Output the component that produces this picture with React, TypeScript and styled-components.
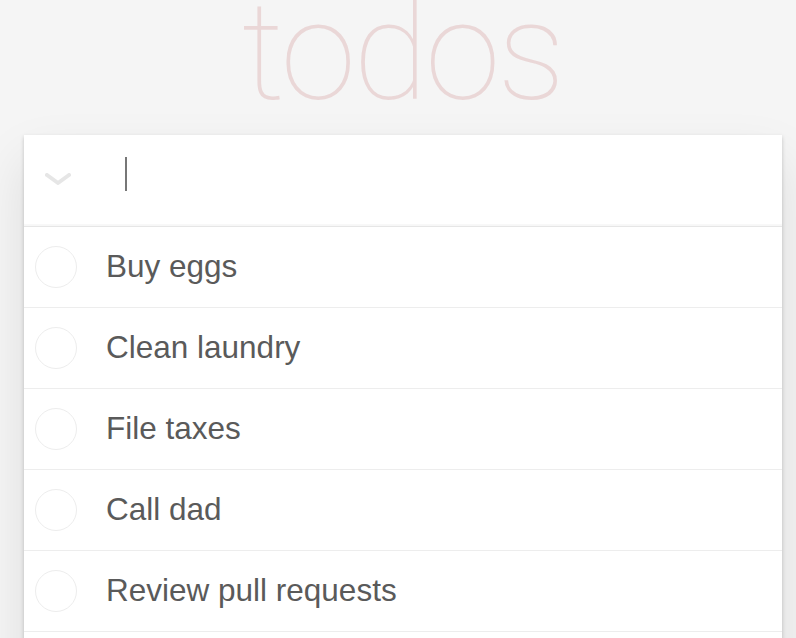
import React from "react";
import styled, { createGlobalStyle } from "styled-components";

const GlobalStyle = createGlobalStyle`
  html, body {
    margin: 0;
    padding: 0;
    background: #f5f5f5;
    font-family: "Liberation Sans", Arial, sans-serif;
    color: #4d4d4d;
    overflow: hidden;
  }
`;

const Page = styled.div`
  width: 796px;
  height: 638px;
  overflow: hidden;
  display: flex;
  flex-direction: column;
`;

const Header = styled.header`
  height: 135px;
  flex: none;
  display: flex;
  flex-direction: column;
`;

const Title = styled.h1`
  margin: 0;
  padding-left: 8px;
  font-family: Roboto, "Open Sans", sans-serif;
  font-weight: 100;
  font-size: 137px;
  line-height: 105px;
  text-align: center;
  color: rgba(175, 47, 47, 0.15);
  letter-spacing: -3px;
`;

const Panel = styled.section`
  flex: none;
  margin-left: 24px;
  width: 758px;
  background: #fff;
  box-shadow: 0 2px 4px rgba(0, 0, 0, 0.2), 0 25px 50px rgba(0, 0, 0, 0.1);
  display: flex;
  flex-direction: column;
`;

const NewRow = styled.div`
  height: 91px;
  display: flex;
  align-items: flex-start;
  box-shadow: inset 0 -2px 1px rgba(0, 0, 0, 0.03);
  border-bottom: 1px solid #e6e6e6;
`;

const ToggleAll = styled.div`
  width: 101px;
  display: flex;
  padding-left: 21px;
  padding-top: 38px;
  box-sizing: border-box;
`;

const Caret = styled.span`
  width: 2px;
  height: 34px;
  background: #777;
  margin-top: 22px;
`;

const List = styled.ul`
  margin: 0;
  padding: 0;
  list-style: none;
`;

const Item = styled.li`
  height: 80px;
  border-bottom: 1px solid #ededed;
  display: flex;
  align-items: center;
`;

const Check = styled.span`
  width: 40px;
  height: 40px;
  border-radius: 50%;
  border: 1px solid #ededed;
  margin-left: 11px;
  flex: none;
`;

const Label = styled.span`
  margin-left: 29px;
  margin-bottom: 2px;
  font-size: 31.5px;
  font-weight: 400;
  color: #5a5a5a;
`;

const todos = [
  "Buy eggs",
  "Clean laundry",
  "File taxes",
  "Call dad",
  "Review pull requests",
  "",
];

export default function App() {
  return (
    <Page>
      <GlobalStyle />
      <Header>
        <Title>todos</Title>
      </Header>
      <Panel>
        <NewRow>
          <ToggleAll>
            <svg width="26" height="12" viewBox="0 0 26 12">
              <path
                d="M2 2 L13 10 L24 2"
                fill="none"
                stroke="#e6e6e6"
                strokeWidth="4"
                strokeLinecap="round"
                strokeLinejoin="round"
              />
            </svg>
          </ToggleAll>
          <Caret />
        </NewRow>
        <List>
          {todos.map((t, i) => (
            <Item key={i}>
              {t && <Check />}
              {t && <Label>{t}</Label>}
            </Item>
          ))}
        </List>
      </Panel>
    </Page>
  );
}
